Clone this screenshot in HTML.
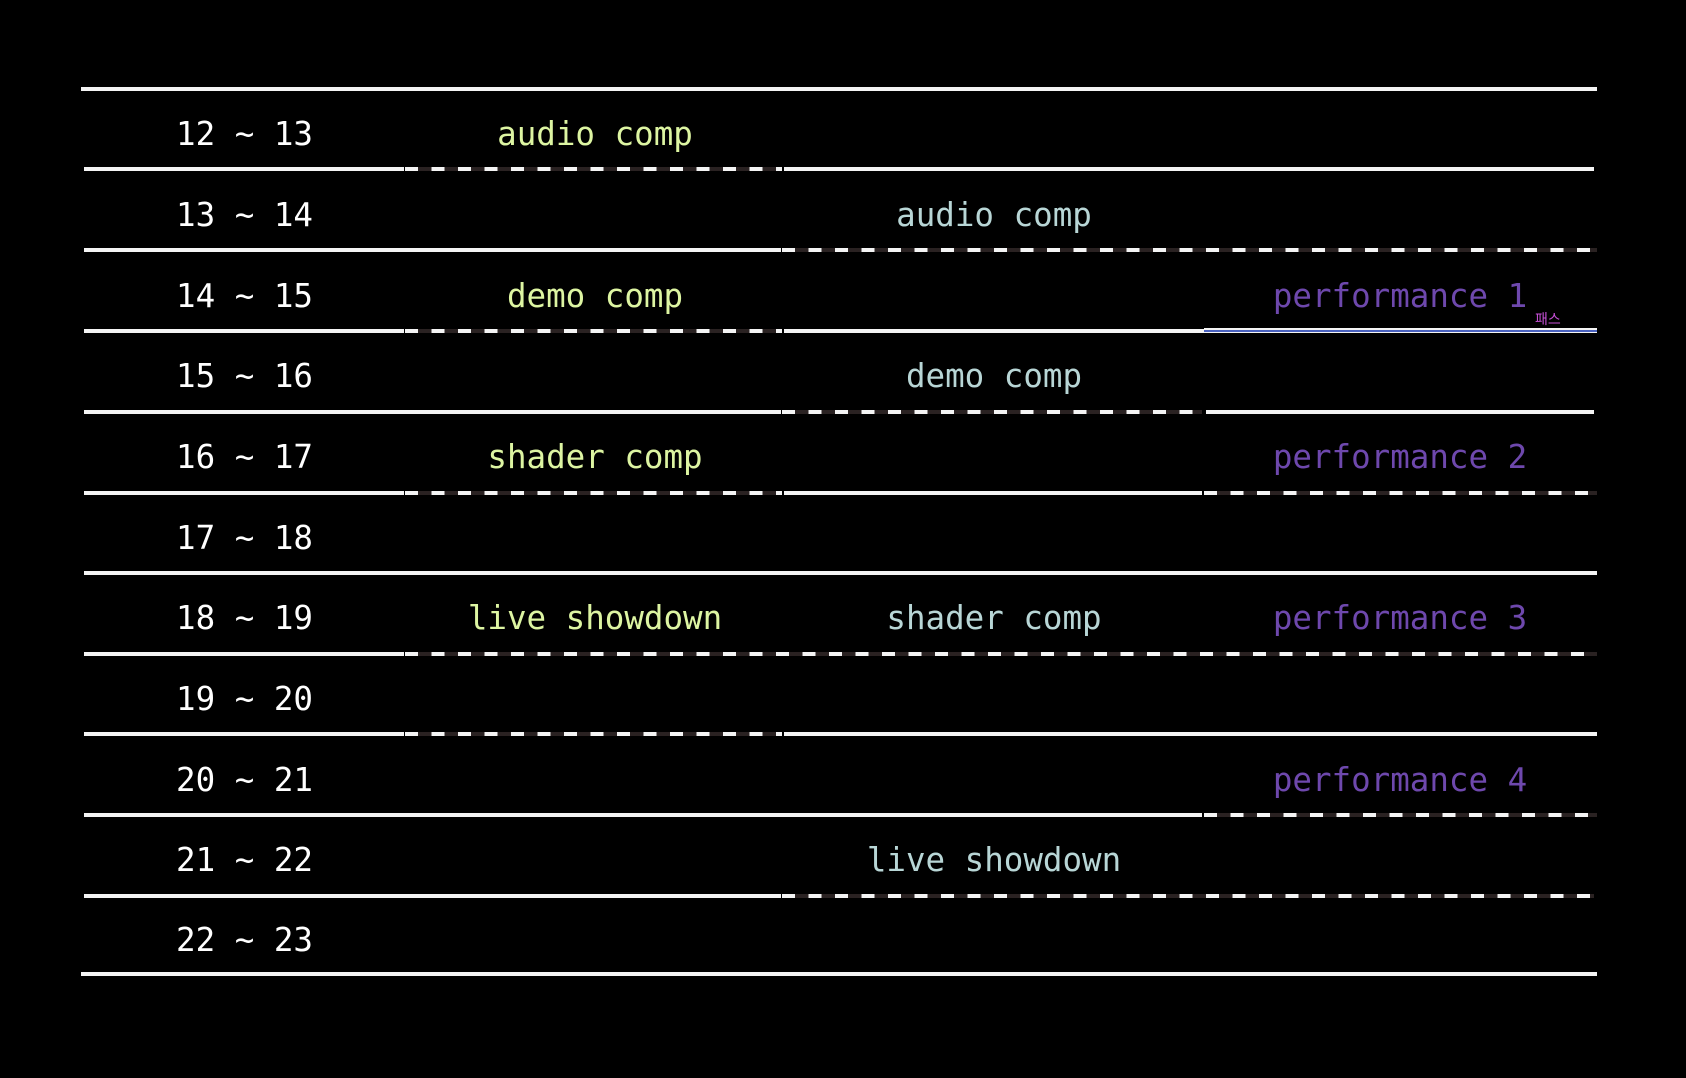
<!DOCTYPE html>
<html><head><meta charset="utf-8"><style>
html,body{margin:0;padding:0;background:#000;width:1686px;height:1078px;overflow:hidden;position:relative}
.t{position:absolute;font-family:"DejaVu Sans Mono","Liberation Mono",monospace;font-size:32.5px;line-height:40px;white-space:pre;transform:translateX(-50%)}
.time{color:#fff;transform:none}
.c1{color:#ddf5a2}.c2{color:#b8d6d6}.c3{color:#6e48ad}
.l{position:absolute;height:4px;background:#f4f4f4}
.d{position:absolute;height:4px;background:repeating-linear-gradient(90deg,#f4f4f4 0 13px,#2a2222 13px 26.5px)}
</style></head><body>
<div class="l" style="left:81px;top:87px;width:1516px"></div>
<div class="l" style="left:81px;top:972px;width:1516px"></div>

<div class="l" style="left:84px;top:167px;width:320px"></div>
<div class="d" style="left:405px;top:167px;width:377px"></div>
<div class="l" style="left:784px;top:167px;width:810px"></div>

<div class="l" style="left:84px;top:248px;width:697px"></div>
<div class="d" style="left:782px;top:248px;width:815px"></div>

<div class="l" style="left:84px;top:329px;width:320px"></div>
<div class="d" style="left:405px;top:329px;width:377px"></div>
<div class="l" style="left:784px;top:329px;width:420px"></div>
<div style="position:absolute;left:1204px;top:328px;width:393px;height:5px;background:#f4f4f4"></div>
<div style="position:absolute;left:1204px;top:330px;width:393px;height:2px;background:#4a62c0"></div>
<div style="position:absolute;left:1535px;top:312px;font-family:'Liberation Sans','Noto Sans CJK KR',sans-serif;font-size:14px;line-height:15px;color:#c850d8">패스</div>

<div class="l" style="left:84px;top:410px;width:697px"></div>
<div class="d" style="left:782px;top:410px;width:420px"></div>
<div class="l" style="left:1206px;top:410px;width:388px"></div>

<div class="l" style="left:84px;top:491px;width:320px"></div>
<div class="d" style="left:405px;top:491px;width:377px"></div>
<div class="l" style="left:784px;top:491px;width:418px"></div>
<div class="d" style="left:1204px;top:491px;width:393px"></div>

<div class="l" style="left:84px;top:571px;width:1513px"></div>

<div class="l" style="left:84px;top:652px;width:320px"></div>
<div class="d" style="left:405px;top:652px;width:1192px"></div>

<div class="l" style="left:84px;top:732px;width:320px"></div>
<div class="d" style="left:405px;top:732px;width:377px"></div>
<div class="l" style="left:784px;top:732px;width:813px"></div>

<div class="l" style="left:84px;top:813px;width:1118px"></div>
<div class="d" style="left:1204px;top:813px;width:393px"></div>

<div class="l" style="left:84px;top:894px;width:697px"></div>
<div class="d" style="left:782px;top:894px;width:812px"></div>

<div class="t time" style="left:176px;top:114px">12 ~ 13</div>
<div class="t time" style="left:176px;top:195px">13 ~ 14</div>
<div class="t time" style="left:176px;top:276px">14 ~ 15</div>
<div class="t time" style="left:176px;top:356px">15 ~ 16</div>
<div class="t time" style="left:176px;top:437px">16 ~ 17</div>
<div class="t time" style="left:176px;top:518px">17 ~ 18</div>
<div class="t time" style="left:176px;top:598px">18 ~ 19</div>
<div class="t time" style="left:176px;top:679px">19 ~ 20</div>
<div class="t time" style="left:176px;top:760px">20 ~ 21</div>
<div class="t time" style="left:176px;top:840px">21 ~ 22</div>
<div class="t time" style="left:176px;top:920px">22 ~ 23</div>

<div class="t c1" style="left:595px;top:114px">audio comp</div>
<div class="t c2" style="left:994px;top:195px">audio comp</div>
<div class="t c1" style="left:595px;top:276px">demo comp</div>
<div class="t c3" style="left:1400px;top:276px">performance 1</div>
<div class="t c2" style="left:994px;top:356px">demo comp</div>
<div class="t c1" style="left:595px;top:437px">shader comp</div>
<div class="t c3" style="left:1400px;top:437px">performance 2</div>
<div class="t c1" style="left:595px;top:598px">live showdown</div>
<div class="t c2" style="left:994px;top:598px">shader comp</div>
<div class="t c3" style="left:1400px;top:598px">performance 3</div>
<div class="t c3" style="left:1400px;top:760px">performance 4</div>
<div class="t c2" style="left:994px;top:840px">live showdown</div>
</body></html>
